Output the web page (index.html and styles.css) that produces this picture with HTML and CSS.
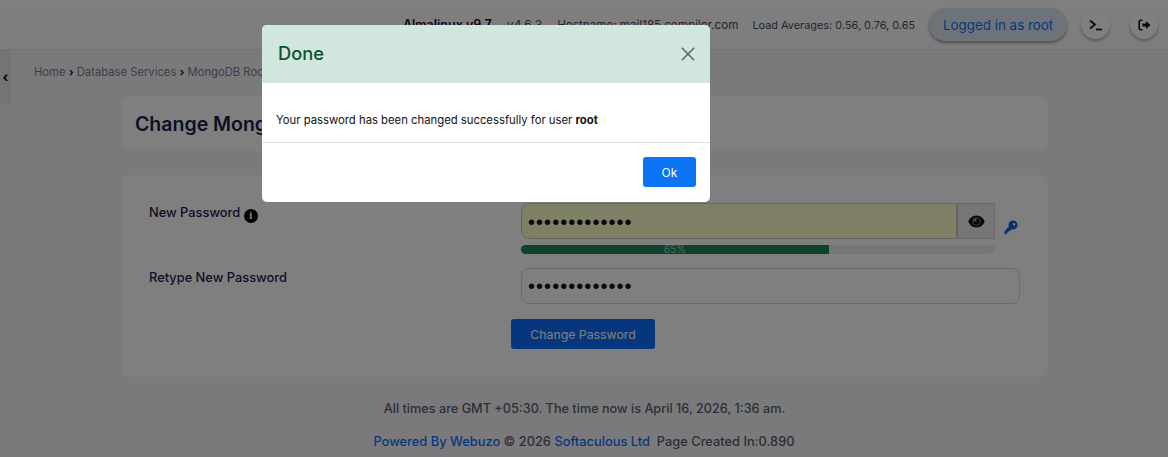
FILE: index.html
```html
<!DOCTYPE html>
<html lang="en">
<head>
<meta charset="utf-8">
<title>Change MongoDB Root Password</title>
<link rel="stylesheet" href="styles.css">
</head>
<body>
<div class="page">
  <header class="topbar">
    <span class="os">Almalinux v9.7</span>
    <span class="meta ver">v4.6.3</span>
    <span class="meta host">Hostname: mail185.compiler.com</span>
    <span class="meta load">Load Averages: 0.56, 0.76, 0.65</span>
    <span class="pill">Logged in as root</span>
    <span class="round term">
      <svg width="14" height="12" viewBox="0 0 14 12"><path d="M1 1.500 6 5.500 1 9.500" fill="none" stroke="#111" stroke-width="1.700"/><path d="M7 10.500h6" stroke="#111" stroke-width="1.700"/></svg>
    </span>
    <span class="round logout">
      <svg width="13" height="12" viewBox="0 0 13 12"><path d="M4.500 1.200H2.800A1.600 1.600 0 0 0 1.200 2.800v6.400A1.600 1.600 0 0 0 2.800 10.800H4.500" fill="none" stroke="#111" stroke-width="1.600"/><path d="M4.500 4.500H8V2l4.500 4L8 10V7.500H4.500z" fill="#111"/></svg>
    </span>
  </header>
  <div class="content">
    <div class="side-toggle">‹</div>
    <nav class="crumbs">Home <b>›</b> Database Services <b>›</b> MongoDB Root Password</nav>
    <section class="card title-card"><h1>Change MongoDB Root Password</h1></section>
    <section class="card form-card">
      <div class="row row-one">
        <label class="label">New Password <span class="info">i</span></label>
        <div class="field-wrap">
          <div class="field-line">
            <div class="group">
              <div class="input auto">•••••••••••••</div>
              <div class="eye">
                <svg width="17" height="13" viewBox="0 0 17 13"><path d="M8.500 0.500C4.500 0.500 1.500 3.500 0.300 6.500 1.500 9.500 4.500 12.500 8.500 12.500S15.500 9.500 16.700 6.500C15.500 3.500 12.500 0.500 8.500 0.500Z" fill="#111"/><circle cx="8.500" cy="6.500" r="4" fill="#8a8a90"/><path d="M8.500 3.300A3.200 3.200 0 1 1 5.300 6.500H8.500Z" fill="#111"/></svg>
              </div>
            </div>
            <svg class="key" width="14" height="14" viewBox="0 0 14 14"><path d="M9 0.500A4.500 4.500 0 0 1 9 9.500C8.500 9.500 8 9.400 7.600 9.300L6 11H4.500V12.500H3V14H0.500V11.200L5 6.500C4.600 6 4.500 5.500 4.500 5A4.500 4.500 0 0 1 9 0.500ZM10 3A1.200 1.200 0 1 0 10 5.400 1.200 1.200 0 0 0 10 3Z" fill="#0a63d8" fill-rule="evenodd"/></svg>
          </div>
          <div class="progress"><div class="bar" style="width:65%"><span class="pct">65%</span></div></div>
        </div>
      </div>
      <div class="row row-two">
        <label class="label">Retype New Password</label>
        <div class="input plain">•••••••••••••</div>
      </div>
      <div class="actions"><button class="primary">Change Password</button></div>
    </section>
    <footer class="foot">
      <p class="time">All times are GMT +05:30. The time now is April 16, 2026, 1:36 am.</p>
      <p class="power"><a>Powered By Webuzo</a> © 2026 <a>Softaculous Ltd</a> &nbsp;Page Created In:0.890</p>
    </footer>
  </div>
</div>
<div class="overlay"></div>
<div class="modal">
  <div class="modal-head">
    <span class="modal-title">Done</span>
    <svg class="close" width="14" height="14" viewBox="0 0 14 14"><path d="M.8.800l12.400 12.400M13.200.800.800 13.200" stroke="#56665e" stroke-width="1.500" fill="none"/></svg>
  </div>
  <div class="modal-body">Your password has been changed successfully for user <b>root</b></div>
  <div class="modal-foot"><button class="ok">Ok</button></div>
</div>
</body>
</html>
```
FILE: styles.css
```css
* { box-sizing: border-box; }
html, body { margin: 0; height: 100%; overflow: hidden; }
body { font-family: Inter, "Noto Sans", sans-serif; background: #f5f5fa; color: #1a1d40; }
.page { height: 457px; overflow: hidden; }

.topbar {
  height: 50px;
  display: flex;
  align-items: center;
  background: linear-gradient(#fff, #fafafa);
  border-bottom: 1px solid #e6e6ea;
  white-space: nowrap;
}
.os { margin-left: 403px; font-size: 12.500px; font-weight: 600; color: #14163a; }
.meta { font-size: 11px; color: #4a4d60; }
.ver { margin-left: 15px; font-size: 12.200px; }
.host { margin-left: 15px; font-size: 11.650px; }
.load { margin-left: 14px; font-size: 10.900px; }
.pill {
  margin-left: 14px;
  width: 138px; height: 33px;
  border-radius: 17px;
  background: #dbe7f3;
  color: #0d6efd;
  font-size: 13.400px;
  display: flex; align-items: center; justify-content: center;
  box-shadow: 0 2px 3px rgba(0,0,0,.35);
}
.round {
  width: 29px; height: 29px;
  border-radius: 50%;
  background: #fff;
  display: flex; align-items: center; justify-content: center;
  box-shadow: 0 2px 3px rgba(0,0,0,.3);
}
.term { margin-left: 14px; }
.logout { margin-left: 20px; width: 28px; }

.content { position: relative; padding: 0 120px 0 121px; }
.side-toggle {
  position: absolute; left: 0; top: 0;
  width: 11px; height: 54px;
  background: #e8e8ea;
  color: #111; font-size: 14px; font-weight: 700; line-height: 54px; text-align: center;
}
.crumbs {
  margin-left: -87px;
  padding-top: 15px;
  height: 46px;
  font-size: 11.250px;
  line-height: 15px;
  color: #7c7e8c;
  white-space: nowrap;
}
.crumbs b { color: #222; }
.card { background: #fff; border-radius: 8px; box-shadow: 0 0 2px rgba(0,0,0,.05); }
.title-card { height: 55px; margin-bottom: 24px; padding-left: 14px; display: flex; align-items: center; }
h1 { margin: 0; font-size: 19.500px; font-weight: 600; color: #1a1d50; white-space: nowrap; }

.form-card { height: 202px; padding: 28px 28px 0; }
.row { display: flex; }
.row-one { height: 65px; }
.row-two { height: 51px; }
.label { width: 372px; font-size: 12.850px; font-weight: 500; color: #1a1d50; padding-top: 2px; display: block; }
.info {
  display: inline-flex; align-items: center; justify-content: center;
  width: 14px; height: 14px; border-radius: 50%;
  background: #000; color: #fff; font: 700 9px "DejaVu Serif", serif;
  vertical-align: -2px; margin-left: 0;
}
.field-wrap { width: 499px; }
.field-line { display: flex; align-items: flex-end; }
.group { width: 474px; height: 36px; display: flex; }
.input {
  height: 36px;
  border: 1px solid #d8d8dd;
  font: 20px/35px "Liberation Sans", sans-serif;
  letter-spacing: 1.050px;
  color: #111;
  padding-left: 6px;
}
.auto { flex: 1; background: #fdfec8; border-radius: 8px 0 0 8px; border-color: #ccccc4; line-height: 36px; }
.plain { width: 499px; border-radius: 8px; background: #fff; }
.eye {
  width: 38px; height: 36px;
  background: #ececf0;
  border: 1px solid #d4d4da;
  border-left-color: #c2c2c8;
  display: flex; align-items: center; justify-content: center;
}
.key { margin-left: 9px; margin-bottom: 5px; }
.progress {
  margin-top: 6px;
  width: 474px; height: 9px;
  background: #e9ecef;
  border-radius: 5px;
}
.bar { height: 100%; background: #198754; border-radius: 5px 0 0 5px; text-align: center; }
.pct {
  display: block;
  font-size: 10px; line-height: 9px;
  color: #d0e4da;
  opacity: .8;
}
.actions { padding-left: 362px; }
.primary {
  width: 144px; height: 30px;
  border: 0; border-radius: 3px;
  background: #0d6efd; color: #fff;
  font: 400 12.300px Inter, sans-serif;
}

.foot { margin-top: 23px; margin-left: -121px; margin-right: -120px; text-align: center; color: #5c5c68; font-size: 12.700px; font-weight: 500; }
.foot p { margin: 0; line-height: 17px; }
.time { padding-left: 1px; }
.power { margin-top: 16px !important; font-size: 12.850px; }
.foot a { color: #0d6efd; }

.overlay { position: fixed; inset: 0; background: rgba(0,0,0,.5); }
.modal {
  position: absolute; left: 262px; top: 25px;
  width: 448px; height: 177px;
  background: #fff;
  border-radius: 5px;
  overflow: hidden;
  color: #111;
}
.modal-head {
  height: 58px;
  background: #d1e7dd;
  display: flex; align-items: center; justify-content: space-between;
  padding: 0 15px 2px 16px;
}
.modal-title { font-size: 18.300px; font-weight: 500; color: #0f5132; }
.close { margin-top: 2px; }
.modal-body {
  height: 60px;
  padding: 29px 14px 0;
  font-size: 11.300px;
  line-height: 17px;
  border-bottom: 1px solid #dee2e6;
  white-space: nowrap;
}
.modal-foot { display: flex; justify-content: flex-end; padding: 14px 14px; }
.ok {
  width: 53px; height: 30px;
  border: 0; border-radius: 3px;
  background: #0a74f5; color: #fff;
  font: 400 12px Inter, sans-serif;
}
```
